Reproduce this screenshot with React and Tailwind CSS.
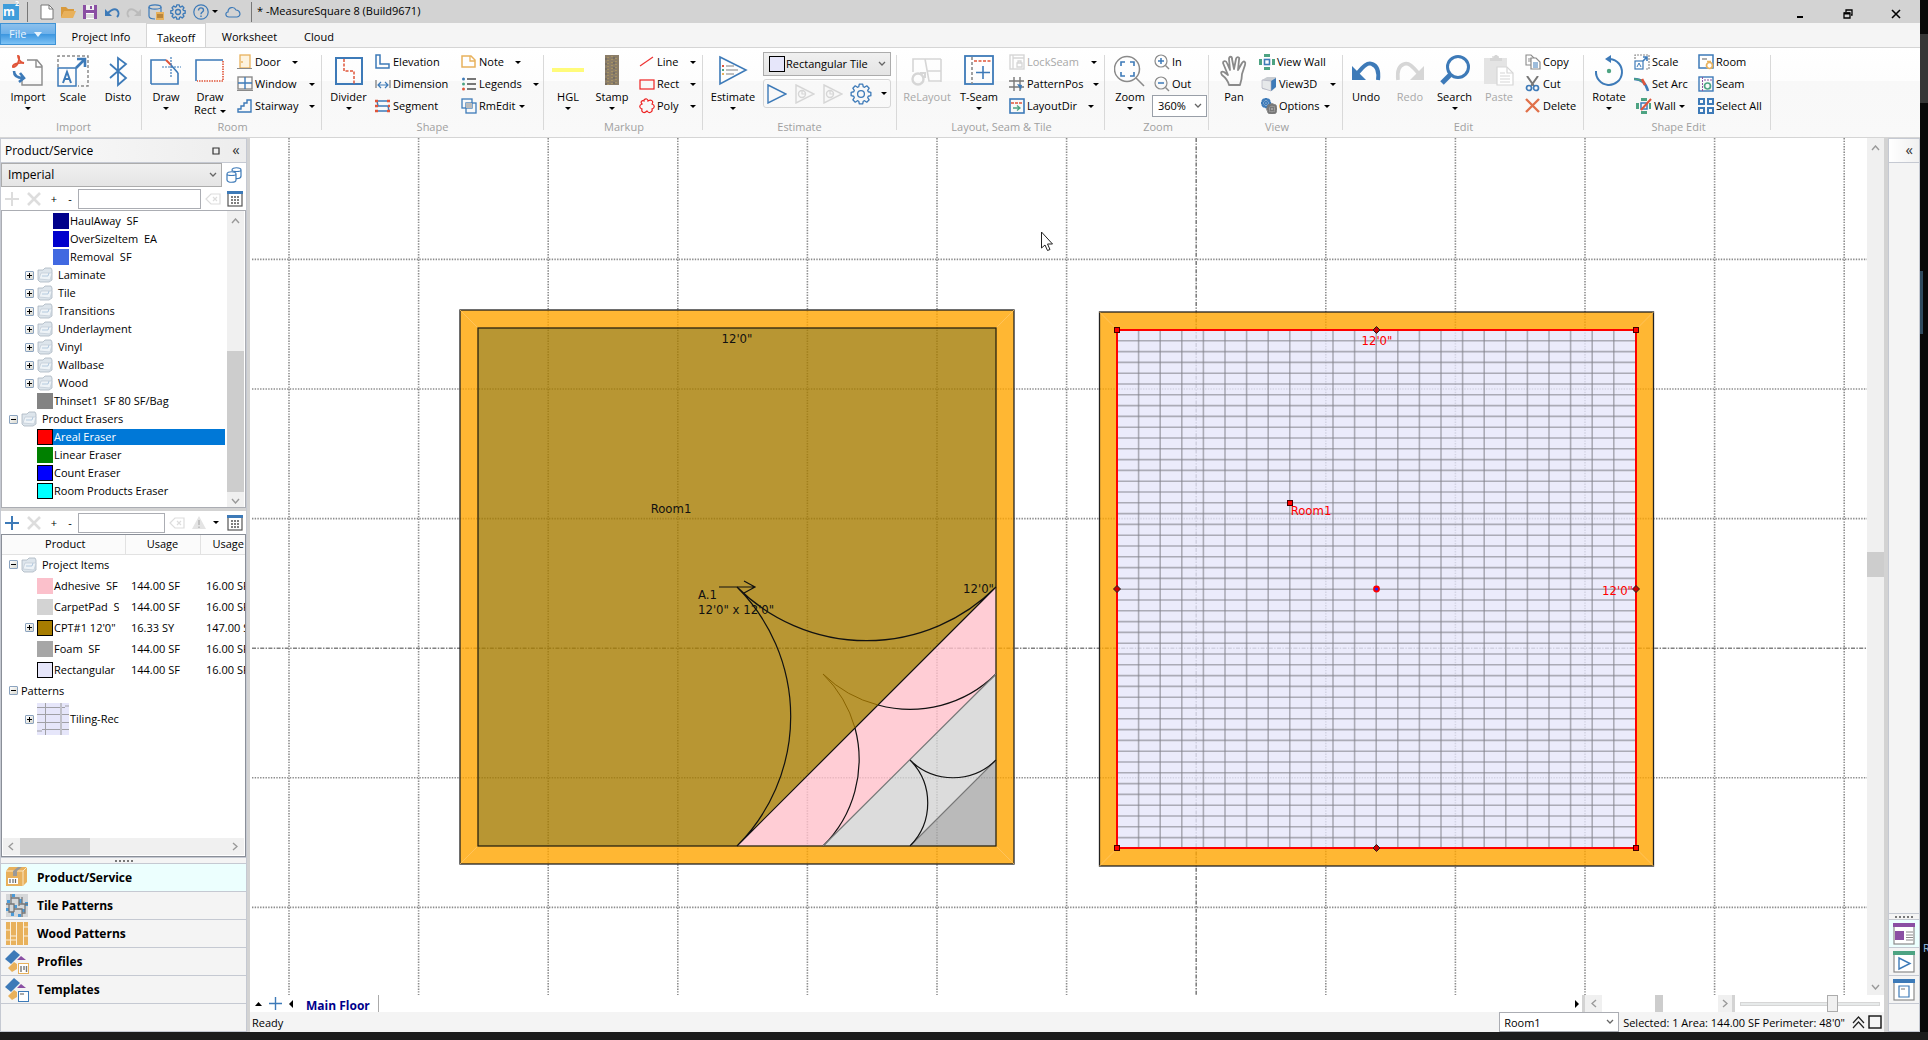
import React from "react";

const B = "#3d7ab8";
const G = "#8a8a8a";
const L = "#d6d6d6";
const R = "#e0553a";
const O = "#e8b15c";
const T = "#4da382";

function Svg({ s = 16, vb, className = "", children }) {
  const box = vb || s;
  return (
    <svg width={s} height={s} viewBox={`0 0 ${box} ${box}`} fill="none" className={`shrink-0 ${className}`} aria-hidden="true">
      {children}
    </svg>
  );
}

const Arrow = ({ className = "" }) => (
  <svg width="6" height="3" viewBox="0 0 6 3" className={`shrink-0 ${className}`} aria-hidden="true">
    <path d="M0 0H6L3 3Z" fill="#000" />
  </svg>
);

const Chevron = ({ className = "" }) => (
  <svg width="8" height="6" viewBox="0 0 8 6" className={`pointer-events-none shrink-0 ${className}`} aria-hidden="true">
    <path d="M1 1L4 4L7 1" fill="none" stroke="#666" strokeWidth="1.3" />
  </svg>
);

function Gear({ cx, cy, r, color, w = 1.5, hole = true }) {
  const pts = [];
  for (let i = 0; i < 8; i++) {
    const a = (i * Math.PI) / 4;
    [[-0.3, 0.76], [-0.17, 1], [0.17, 1], [0.3, 0.76]].forEach(([d, k]) => {
      pts.push(`${(cx + Math.sin(a + d) * r * k).toFixed(2)},${(cy - Math.cos(a + d) * r * k).toFixed(2)}`);
    });
  }
  return (
    <g stroke={color} strokeWidth={w} fill="none" strokeLinejoin="round">
      <polygon points={pts.join(" ")} />
      {hole && <circle cx={cx} cy={cy} r={r * 0.34} />}
    </g>
  );
}

/* ---------- ribbon icons, 32px ---------- */
const big = {
  import: (
    <Svg s={32}>
      <path d="M10 21V30H30V11L25 5H15" stroke={G} strokeWidth="1.4" />
      <path d="M24 5V12H30" stroke={G} strokeWidth="1.4" />
      <path d="M6 1C8 1 7 5 6 8C5 10 3 12 1 12C0 10 5 7 12 8C8 8 6 3 6 1Z" stroke={R} strokeWidth="1.8" />
      <path d="M2 16C2 21 6 23 11 23M8 18L12 23L7 27" stroke={B} strokeWidth="2.6" />
    </Svg>
  ),
  scale: (
    <Svg s={32}>
      <path d="M1 12V1H31V31H21" stroke={G} strokeWidth="1.5" strokeDasharray="3 2" />
      <rect x="1" y="13" width="18" height="18" stroke={B} strokeWidth="1.5" />
      <path d="M6 28L10 17L14 28M7 24H13" stroke={B} strokeWidth="2" />
      <path d="M19 13L27 5M20 4H28V12" stroke={B} strokeWidth="2.6" />
    </Svg>
  ),
  disto: (
    <Svg s={32}>
      <path d="M8 9L24 23L16 30V3L24 9L8 23" stroke={B} strokeWidth="1.8" />
    </Svg>
  ),
  draw: (
    <Svg s={32}>
      <path d="M1 29V5H16M28 18V29H1" stroke={B} strokeWidth="1.6" />
      <path d="M16 5L21 10" stroke={R} strokeWidth="2" />
      <path d="M21 10L28 18" stroke={B} strokeWidth="1.6" />
      <path d="M21 2V22M12 12H31" stroke={B} strokeWidth="1.2" strokeDasharray="2 1" />
    </Svg>
  ),
  drawRect: (
    <Svg s={32}>
      <path d="M2 26V5H29" stroke={B} strokeWidth="1.6" />
      <path d="M29 6V26H3" stroke={R} strokeWidth="1.6" strokeDasharray="1.5 1" />
    </Svg>
  ),
  divider: (
    <Svg s={32}>
      <rect x="3" y="3" width="26" height="26" stroke={B} strokeWidth="2" />
      <path d="M11 4V16H21V29" stroke={R} strokeWidth="1.5" strokeDasharray="3 1.5" />
    </Svg>
  ),
  hgl: (
    <Svg s={32}>
      <path d="M0 15H32" stroke="#fffb7a" strokeWidth="4" />
    </Svg>
  ),
  stamp: (
    <Svg s={32}>
      <rect x="9" y="0" width="14" height="30" fill="#8b7d68" />
      <path d="M12 2V30M16 1V29M20 3V30" stroke="#c2a860" strokeWidth="1" strokeDasharray="1 2" />
      <path d="M10 3V30M18 2V30" stroke="#6d675f" strokeWidth="1.4" strokeDasharray="2 3" />
    </Svg>
  ),
  estimate: (
    <Svg s={32}>
      <path d="M3 2L29 15L3 29Z" stroke={B} strokeWidth="1.6" />
      <path d="M9 11H17M9 15H21M9 19H17" stroke="#aaa" strokeWidth="1.5" />
      <path d="M5 11H7" stroke={R} strokeWidth="2" />
      <path d="M5 15H7" stroke={T} strokeWidth="2" />
      <path d="M5 19H7" stroke={O} strokeWidth="2" />
    </Svg>
  ),
  relayout: (
    <Svg s={32}>
      <path d="M2 17V4H30M14 4L18 26H30M16 16H30M30 4V27" stroke={L} strokeWidth="1.6" />
      <circle cx="7" cy="24" r="5.5" stroke={L} strokeWidth="2.4" />
      <path d="M9 18L14 18V23" stroke={L} strokeWidth="2" />
    </Svg>
  ),
  tseam: (
    <Svg s={32}>
      <rect x="2" y="1" width="28" height="28" stroke={B} strokeWidth="1.8" />
      <path d="M9 2V29" stroke={G} strokeWidth="1.6" strokeDasharray="3 2" />
      <path d="M11 6H29" stroke={R} strokeWidth="1.6" strokeDasharray="3 1.5" />
      <path d="M20 11V24M13 17.5H27" stroke={B} strokeWidth="1.6" />
    </Svg>
  ),
  zoom: (
    <Svg s={32}>
      <circle cx="13" cy="14" r="12.5" stroke={G} strokeWidth="1.5" />
      <path d="M22 23L30 31" stroke={G} strokeWidth="1.6" />
      <path d="M7 11V7H11M16 7H20V11M20 17V21H16M11 21H7V17" stroke={B} strokeWidth="1.6" />
    </Svg>
  ),
  pan: (
    <Svg s={32}>
      <path
        d="M11 30C10 26 8 23 4 20C2 17 4 16 6 17L10 20L5 8C5 6 8 5 9 8L12 15L11 4C11 1 14 1 14 4L16 14L18 4C19 1 22 2 21 5L20 15L24 8C26 5 28 7 27 10L24 19C24 24 23 27 22 30Z"
        stroke={G}
        strokeWidth="1.8"
        strokeLinejoin="round"
      />
    </Svg>
  ),
  undo: (
    <Svg s={32}>
      <path d="M6 20C13 12 17 7 22 9C28 11 29 17 28 25" stroke={B} strokeWidth="4" />
      <path d="M2 11V25H16Z" fill={B} />
    </Svg>
  ),
  redo: (
    <Svg s={32}>
      <path d="M26 20C19 12 15 7 10 9C4 11 3 17 4 25" stroke={L} strokeWidth="3.6" />
      <path d="M30 11V25H16Z" fill={L} />
    </Svg>
  ),
  search: (
    <Svg s={32}>
      <circle cx="19" cy="12" r="10.5" stroke={B} strokeWidth="3" />
      <path d="M11 20L3 28" stroke={B} strokeWidth="5" />
    </Svg>
  ),
  paste: (
    <Svg s={32}>
      <path d="M1 3H9V1H16V3H24V12H14V29H1Z" fill="#e4e4e4" />
      <path d="M7 6V3H10L12 0H14L16 3H19V6Z" fill={L} />
      <path d="M14 12H24L30 18V30H14Z" fill="#fff" stroke={L} strokeWidth="1.2" />
      <path d="M24 12V18H30M17 18H22M17 21H27M17 24H27M17 27H27" stroke={L} strokeWidth="1.2" />
    </Svg>
  ),
  rotate: (
    <Svg s={32}>
      <path d="M3 16A13 13 0 1 0 17 4" stroke={B} strokeWidth="2" />
      <path d="M18 0V8L12 4Z" fill={B} />
      <circle cx="16" cy="16" r="2.2" fill={T} />
    </Svg>
  ),
};

/* ---------- ribbon icons, 16px ---------- */
const sm = {
  door: (
    <Svg>
      <rect x="3" y="1" width="10" height="13" fill="#fdf3df" stroke={O} strokeWidth="1.3" />
      <path d="M0 14.5H15" stroke={G} />
      <circle cx="5" cy="8" r="0.9" fill={O} />
    </Svg>
  ),
  window: (
    <Svg>
      <rect x="1" y="1" width="14" height="12" stroke={G} strokeWidth="1.4" />
      <path d="M8 1V13M1 7H15" stroke={B} strokeWidth="1.4" />
      <path d="M0 14.5H16" stroke={G} />
    </Svg>
  ),
  stair: (
    <Svg>
      <path d="M1 14H14V2H10V5H7V8H4V11H1Z" stroke={B} strokeWidth="1.4" />
    </Svg>
  ),
  elevation: (
    <Svg>
      <path d="M1 1H5V10H14V14H1Z" stroke={B} strokeWidth="1.5" />
    </Svg>
  ),
  dimension: (
    <Svg>
      <path d="M1 4V12M15 4V12" stroke={G} strokeWidth="1.4" />
      <path d="M3 9H13M6 6L3 9L6 12M10 6L13 9L10 12" stroke={B} strokeWidth="1.2" />
    </Svg>
  ),
  segment: (
    <Svg>
      <path d="M1 3H15M1 13H15M2 3L3 8M13 8L14 13M2 8H14" stroke={B} strokeWidth="1.4" />
      <path d="M0 3H3M12 3H15M0 8H3M13 8H15M0 13H3M12 13H15" stroke={R} strokeWidth="2.4" />
    </Svg>
  ),
  note: (
    <Svg>
      <path d="M1 2H10L14 6V13H1Z" stroke={O} strokeWidth="1.5" />
      <path d="M9 2V7H14" stroke={O} strokeWidth="1.3" />
    </Svg>
  ),
  legends: (
    <Svg>
      <path d="M6 3H15M6 8H15M6 13H15" stroke="#777" strokeWidth="1.8" />
      <circle cx="2.5" cy="3" r="1.5" fill={B} />
      <circle cx="2.5" cy="8" r="1.5" fill={T} />
      <circle cx="2.5" cy="13" r="1.5" fill={R} />
    </Svg>
  ),
  rmedit: (
    <Svg>
      <rect x="1" y="1" width="10" height="9" stroke={B} strokeWidth="1.3" />
      <rect x="5" y="5" width="10" height="10" stroke={B} strokeWidth="1.3" />
      <rect x="5" y="5" width="6" height="5" fill="#bbb" />
    </Svg>
  ),
  line: (
    <Svg>
      <path d="M1 12L14 3" stroke="#e33" strokeWidth="1.2" />
    </Svg>
  ),
  rect: (
    <Svg>
      <rect x="1" y="4" width="14" height="9" stroke="#e22" strokeWidth="1.2" />
    </Svg>
  ),
  poly: (
    <Svg>
      <path d="M5 2C7 0 9 1 9 3C12 1 15 3 13 6C16 7 16 10 13 11C14 14 10 16 8 13C5 16 2 14 3 11C0 10 0 7 3 6C1 4 3 2 5 3Z" stroke="#e22" strokeWidth="1.2" />
    </Svg>
  ),
  lockseam: (
    <Svg>
      <rect x="1" y="1" width="14" height="14" stroke={L} strokeWidth="1.4" />
      <path d="M4 1V15M4 4H15M8 9H13V13H8ZM9 9V7H12V9" stroke={L} strokeWidth="1.3" />
    </Svg>
  ),
  patternpos: (
    <Svg>
      <path d="M5 1V15M11 1V15M0 5H15M0 11H15" stroke="#777" strokeWidth="1.4" />
      <path d="M8 8L13 9L12 14Z" fill={B} />
    </Svg>
  ),
  layoutdir: (
    <Svg>
      <rect x="1" y="1" width="14" height="14" stroke={B} strokeWidth="1.6" />
      <path d="M2 5H14" stroke={R} strokeWidth="1.4" strokeDasharray="3 1" />
      <path d="M4 10H11M8 7.5L11 10L8 12.5" stroke={T} strokeWidth="1.3" />
    </Svg>
  ),
  zin: (
    <Svg>
      <circle cx="7" cy="7" r="6" stroke={G} strokeWidth="1.2" />
      <path d="M11.5 11.5L15 15" stroke={G} strokeWidth="1.4" />
      <path d="M7 4V10M4 7H10" stroke={B} strokeWidth="1.5" />
    </Svg>
  ),
  zout: (
    <Svg>
      <circle cx="7" cy="7" r="6" stroke={G} strokeWidth="1.2" />
      <path d="M11.5 11.5L15 15" stroke={G} strokeWidth="1.4" />
      <path d="M4 7H10" stroke={B} strokeWidth="1.5" />
    </Svg>
  ),
  viewwall: (
    <Svg>
      <path d="M5 0H11V3H5ZM5 13H11V16H5ZM0 5H3V11H0ZM13 5H16V11H13Z" fill={T} />
      <rect x="5.5" y="5.5" width="5" height="5" stroke={B} strokeWidth="1.6" />
    </Svg>
  ),
  view3d: (
    <Svg>
      <path d="M1 4L6 1H15V11L11 15L1 13Z" fill="#c9cdd2" />
      <path d="M10 5L15 2V11L10 15Z" fill={B} />
      <path d="M1 4L10 5V15L1 12Z" fill="#e6e8ea" stroke="#aab" strokeWidth="0.6" />
    </Svg>
  ),
  options: (
    <Svg>
      <Gear cx={5} cy={5} r={4.3} color={B} w={1.8} />
      <Gear cx={11} cy={11} r={4.8} color="#777" w={2} />
    </Svg>
  ),
  copy: (
    <Svg>
      <path d="M1 1H6L9 4V11H1ZM3 5H6M3 7H6" stroke={G} strokeWidth="1.1" />
      <path d="M6 4H11L15 8V15H6Z" fill="#fff" stroke={G} strokeWidth="1.2" />
      <path d="M8 9H13M8 11H13M8 13H13" stroke={B} />
    </Svg>
  ),
  cut: (
    <Svg>
      <path d="M2 0L9 10M13 0L6 10" stroke="#777" strokeWidth="2" />
      <circle cx="4" cy="12" r="2.5" stroke={B} strokeWidth="1.7" />
      <circle cx="11" cy="12" r="2.5" stroke={B} strokeWidth="1.7" />
    </Svg>
  ),
  del: (
    <Svg>
      <path d="M1 1L14 14M14 1L1 14" stroke="#e0714a" strokeWidth="2.4" />
    </Svg>
  ),
  scale: (
    <Svg>
      <path d="M1 5V1H15V15H11" stroke={G} strokeWidth="1.2" strokeDasharray="2 1" />
      <rect x="1" y="7" width="8" height="8" stroke={B} strokeWidth="1.2" />
      <path d="M3 13L5 9L7 13" stroke={B} />
      <path d="M9 7L13 3M9 3H13V7" stroke={B} strokeWidth="1.6" />
    </Svg>
  ),
  setarc: (
    <Svg>
      <path d="M0 3C8 3 12 7 14 15" stroke={B} strokeWidth="2.4" />
      <path d="M0 3C5 3 8 5 10 7" stroke={T} strokeWidth="1.6" />
      <path d="M8 3L11 9" stroke={R} strokeWidth="2.6" />
    </Svg>
  ),
  wall: (
    <Svg>
      <path d="M5 0H11V3H5ZM5 13H11V16H5ZM0 5H3V11H0ZM13 5H15V11H13Z" fill={T} />
      <rect x="5" y="5" width="6" height="6" stroke={B} strokeWidth="1.5" />
      <path d="M5 12L15 1" stroke={R} strokeWidth="2" />
    </Svg>
  ),
  room: (
    <Svg>
      <rect x="1" y="1" width="14" height="13" stroke={B} strokeWidth="1.5" />
      <path d="M4 5H9" stroke="#999" strokeWidth="1.6" />
      <circle cx="11.5" cy="11.5" r="3" fill="#fff" stroke={O} strokeWidth="1.7" />
      <path d="M9 7.5H13" stroke={O} strokeWidth="1.5" />
    </Svg>
  ),
  seam: (
    <Svg>
      <rect x="1" y="1" width="14" height="14" stroke={B} strokeWidth="1.4" />
      <path d="M4.5 1V15M6 4H14" stroke="#8c50a0" strokeDasharray="2 1" />
      <circle cx="9.5" cy="10" r="3" stroke={T} strokeWidth="1.7" />
    </Svg>
  ),
  selectall: (
    <Svg>
      <path d="M1 1H6V6H1ZM10 1H15V6H10ZM1 10H6V15H1ZM10 10H15V15H10Z" stroke={B} strokeWidth="2" />
    </Svg>
  ),
};

function Big({ icon, label, w = "w-11", arrow, off, inlineArrow }) {
  return (
    <button className={`flex shrink-0 flex-col items-center pt-[7px] ${w} ${off ? "text-[#a8a8a8]" : "text-black"}`}>
      {big[icon]}
      <span className="mt-[3px] text-center leading-[13px] whitespace-pre">
        {label}
        {inlineArrow && <Arrow className="ml-1 inline-block align-middle" />}
      </span>
      {arrow && <Arrow className="mt-1" />}
    </button>
  );
}

function Small({ icon, label, w = "", arrow, off }) {
  return (
    <button className={`flex h-[22px] items-center gap-[2px] whitespace-nowrap ${w} ${off ? "text-[#a8a8a8]" : "text-black"}`}>
      {sm[icon]}
      <span>{label}</span>
      {arrow && <Arrow className="ml-auto" />}
    </button>
  );
}

function Group({ label, w, children }) {
  return (
    <section aria-label={label} className={`flex shrink-0 ${w}`}>
      <div className="flex min-w-0 grow flex-col">
        <div className="flex h-[71px]">{children}</div>
        <div className="text-center leading-4 text-[#a0a0a0]">{label}</div>
      </div>
      <div className="mt-[7px] h-[75px] w-px bg-[#d9d9d9]" />
    </section>
  );
}

const Stack = ({ className = "", children }) => <div className={`flex shrink-0 flex-col items-start pt-[3px] ${className}`}>{children}</div>;

function TitleBar() {
  const btn = "flex h-5 w-5 shrink-0 items-center justify-center";
  return (
    <header className="flex h-[23px] items-center bg-[#d3d3d3] pl-[3px]">
      <div className="flex h-4 w-4 items-start justify-center bg-[#3f9ddb] text-[12px] leading-4 font-bold text-white">
        m<sup className="text-[7px] leading-[8px]">2</sup>
      </div>
      <div className="ml-2 h-5 w-px bg-[#777]" />
      <div className="ml-[9px] flex">
        <button aria-label="New" className={btn}><Svg><path d="M2 1H10L14 5V15H2Z" fill="#fff" stroke="#777" /><path d="M10 1V5H14" stroke="#777" /></Svg></button>
        <button aria-label="Open" className={`${btn} ml-[1px]`}><Svg><path d="M1 14V3H6L8 5H14V8H4Z" fill="#d99a3c" /><path d="M4 7H16L13 14H1Z" fill={O} /></Svg></button>
        <button aria-label="Save" className={`${btn} ml-[2px]`}><Svg><path d="M1 1H15V15H1Z" fill="#8a4fa3" /><path d="M4 1H12V6H4Z" fill="#eee" /><path d="M4 9H12V15H4Z" fill="#fff" /><path d="M9 2V5" stroke="#8a4fa3" strokeWidth="2" /><path d="M4 11H12M4 13H12" stroke="#bbb" /></Svg></button>
        <button aria-label="Undo" className={`${btn} ml-[2px]`}><Svg><path d="M3 10C7 6 10 4 13 6C15 8 15 11 13 13" stroke={B} strokeWidth="2" /><path d="M1 5V12H8Z" fill={B} /></Svg></button>
        <button aria-label="Redo" className={`${btn} ml-[2px]`}><Svg><path d="M13 10C9 6 6 4 3 6C1 8 1 11 3 13" stroke="#bbb" strokeWidth="2" /><path d="M15 5V12H8Z" fill="#bbb" /></Svg></button>
        <button aria-label="Database" className={`${btn} ml-[2px]`}><Svg><ellipse cx="7" cy="3" rx="6" ry="2.2" stroke={B} strokeWidth="1.2" /><path d="M1 3V12C1 14 4 15 7 15M13 3V8" stroke={B} strokeWidth="1.2" /><rect x="8" y="8" width="8" height="8" fill={O} /><path d="M10 10V14M12 10V14M14 10V14" stroke="#8a5a1c" /></Svg></button>
        <button aria-label="Settings" className={`${btn} ml-[2px]`}><Svg><Gear cx={8} cy={8} r={7.3} color={B} w={1.3} /></Svg></button>
        <button aria-label="Help" className={`${btn} ml-[3px]`}><Svg><circle cx="8" cy="8" r="7.2" stroke={B} strokeWidth="1.2" /><path d="M5.5 6.5C5.5 3 10.5 3 10.5 6.2C10.5 8 8 8 8 10.2M8 11.5V13" stroke={B} strokeWidth="1.4" /></Svg></button>
        <button aria-label="Help menu" className="flex w-2 items-center justify-center"><Arrow /></button>
        <button aria-label="Cloud" className={`${btn} ml-1`}><Svg><path d="M4 13C0 13 0 8 3 8C3 3 9 2 11 6C15 6 17 12 12 13Z" stroke={B} strokeWidth="1.2" /></Svg></button>
      </div>
      <div className="ml-2 h-5 w-px bg-[#777]" />
      <h1 className="ml-[5px] text-[11px] whitespace-nowrap text-black">* -MeasureSquare 8 (Build9671)</h1>
      <div className="ml-auto flex items-center pt-1">
        <button aria-label="Minimize" className="flex h-4 w-12 items-center justify-center"><Svg s={10}><path d="M2 8H8" stroke="#000" strokeWidth="2" /></Svg></button>
        <button aria-label="Restore" className="flex h-4 w-12 items-center justify-center"><Svg s={10}><path d="M1 4H7V9H1ZM3 3V1H9V6H8" stroke="#000" strokeWidth="1.3" /><path d="M1 4.5H7" stroke="#000" strokeWidth="2" /></Svg></button>
        <button aria-label="Close" className="flex h-4 w-12 items-center justify-center"><Svg s={10}><path d="M1 1L9 9M9 1L1 9" stroke="#000" strokeWidth="1.6" /></Svg></button>
      </div>
    </header>
  );
}

function Tabs() {
  return (
    <nav className="flex h-6 items-start bg-[#f5f5f5] text-[11px] leading-5">
      <button className="flex h-[22px] w-14 items-center gap-2 border border-[#3f93d6] bg-[linear-gradient(#8cc0ec_0,#6cb0ea_50%,#3b95df_50%,#7fc3f5_100%)] pl-2 text-[#e8f4fd]">
        File
        <svg width="8" height="5" viewBox="0 0 8 5" aria-hidden="true"><path d="M0 0H8L4 5Z" fill="#e8f4fd" /></svg>
      </button>
      <button className="ml-[6px] h-6 w-[78px] pt-1">Project Info</button>
      <button className="ml-[6px] -mb-px h-[25px] w-[60px] border border-b-0 border-[#d5d5d5] bg-white pt-[3px]">Takeoff</button>
      <button className="ml-[6px] h-6 w-[75px] pt-1">Worksheet</button>
      <button className="ml-[6px] h-6 w-[52px] pt-1">Cloud</button>
    </nav>
  );
}

const PlayMini = ({ color, inner }) => (
  <Svg s={20}>
    <path d="M1 1L19 10L1 19Z" stroke={color} strokeWidth="1.4" />
    {inner && <><circle cx="7" cy="10" r="3.5" stroke={color} strokeWidth="1.4" /><path d="M7 7V10H10" stroke={color} strokeWidth="1.2" /></>}
  </Svg>
);

function Ribbon() {
  return (
    <div className="flex h-[91px] border-t border-b border-[#d5d5d5] bg-[linear-gradient(#fff_0,#fdfdfd_33px,#f8f8f8_33px,#f9f9f9_100%)] pl-px text-[11px] leading-4">
      <Group label="Import" w="w-[141px] pl-[5px]">
        <Big icon="import" label="Import" arrow />
        <Big icon="scale" label="Scale" w="w-[46px]" />
        <Big icon="disto" label="Disto" />
      </Group>
      <Group label="Room" w="w-[180px] pl-[2px]">
        <Big icon="draw" label="Draw" arrow />
        <Big icon="drawRect" label={"Draw\nRect"} inlineArrow />
        <Stack className="ml-[5px]">
          <Small icon="door" label="Door" w="w-[61px]" arrow />
          <Small icon="window" label="Window" w="w-[78px]" arrow />
          <Small icon="stair" label="Stairway" w="w-[78px]" arrow />
        </Stack>
      </Group>
      <Group label="Shape" w="w-[222px]">
        <Big icon="divider" label="Divider" w="w-[53px]" arrow />
        <Stack>
          <Small icon="elevation" label="Elevation" w="w-[86px]" />
          <Small icon="dimension" label="Dimension" w="w-[86px]" />
          <Small icon="segment" label="Segment" w="w-[86px]" />
        </Stack>
        <Stack>
          <Small icon="note" label="Note" w="w-[60px]" arrow />
          <Small icon="legends" label="Legends" w="w-[78px]" arrow />
          <Small icon="rmedit" label="RmEdit" w="w-16" arrow />
        </Stack>
      </Group>
      <Group label="Markup" w="w-[159px] pl-[2px]">
        <Big icon="hgl" label="HGL" arrow />
        <Big icon="stamp" label="Stamp" arrow />
        <Stack className="ml-[5px]">
          <Small icon="line" label="Line" w="w-[57px]" arrow />
          <Small icon="rect" label="Rect" w="w-[57px]" arrow />
          <Small icon="poly" label="Poly" w="w-[57px]" arrow />
        </Stack>
      </Group>
      <Group label="Estimate" w="w-[194px]">
        <Big icon="estimate" label="Estimate" w="w-[60px]" arrow />
        <div className="flex w-32 flex-col gap-[3px] pt-1">
          <div className="relative h-6">
            <div className="pointer-events-none absolute top-1 left-[6px] h-4 w-4 border border-black bg-[#e6e6fa]" />
            <select aria-label="Product" className="h-6 w-full appearance-none border border-[#acacac] bg-linear-to-b from-[#f0f0f0] to-[#e4e4e4] pl-[22px] text-[11px]">
              <option>Rectangular Tile</option>
            </select>
            <Chevron className="absolute top-[9px] right-[5px]" />
          </div>
          <div className="flex h-[29px] items-center rounded-[3px] border border-[#d5d5d5] px-[3px]">
            <button aria-label="Run"><PlayMini color={B} /></button>
            <button aria-label="Run again" className="ml-2"><PlayMini color={L} inner /></button>
            <button aria-label="Run all" className="ml-2"><PlayMini color={L} inner /></button>
            <button aria-label="Estimate options" className="ml-[7px]"><Svg s={22}><Gear cx={11} cy={11} r={10} color={B} w={1.3} /></Svg></button>
            <button aria-label="More estimate options" className="ml-auto"><Arrow /></button>
          </div>
        </div>
      </Group>
      <Group label="Layout, Seam & Tile" w="w-[208px] pl-[2px]">
        <Big icon="relayout" label="ReLayout" w="w-[56px]" off />
        <Big icon="tseam" label="T-Seam" w="w-12" arrow />
        <Stack className="ml-[6px]">
          <Small icon="lockseam" label="LockSeam" w="w-[88px]" arrow off />
          <Small icon="patternpos" label="PatternPos" w="w-[90px]" arrow />
          <Small icon="layoutdir" label="LayoutDir" w="w-[85px]" arrow />
        </Stack>
      </Group>
      <Group label="Zoom" w="w-[104px] pl-[3px]">
        <Big icon="zoom" label="Zoom" arrow />
        <Stack className="w-[55px]">
          <Small icon="zin" label="In" w="ml-[2px]" />
          <Small icon="zout" label="Out" w="ml-[2px]" />
          <div className="relative w-full">
            <select aria-label="Zoom level" className="h-[22px] w-full appearance-none border border-[#999fa8] bg-white pl-[5px] text-[11px]">
              <option>360%</option>
            </select>
            <Chevron className="absolute top-2 right-[5px]" />
          </div>
        </Stack>
      </Group>
      <Group label="View" w="w-[134px] pl-[3px]">
        <Big icon="pan" label="Pan" />
        <Stack className="ml-[3px]">
          <Small icon="viewwall" label="View Wall" />
          <Small icon="view3d" label="View3D" w="pl-[2px] w-[77px]" arrow />
          <Small icon="options" label="Options" w="pl-[2px] w-[71px]" arrow />
        </Stack>
      </Group>
      <Group label="Edit" w="w-[241px] pl-px">
        <Big icon="undo" label="Undo" />
        <Big icon="redo" label="Redo" off />
        <Big icon="search" label="Search" w="w-[45px]" arrow />
        <Big icon="paste" label="Paste" off />
        <Stack className="ml-1">
          <Small icon="copy" label="Copy" />
          <Small icon="cut" label="Cut" />
          <Small icon="del" label="Delete" />
        </Stack>
      </Group>
      <Group label="Shape Edit" w="w-[187px] pl-[3px]">
        <Big icon="rotate" label="Rotate" arrow />
        <Stack className="ml-[3px]">
          <Small icon="scale" label="Scale" w="w-16" />
          <Small icon="setarc" label="Set Arc" w="w-16" />
          <Small icon="wall" label="Wall" w="pl-[2px] w-[51px]" arrow />
        </Stack>
        <Stack>
          <Small icon="room" label="Room" />
          <Small icon="seam" label="Seam" />
          <Small icon="selectall" label="Select All" />
        </Stack>
      </Group>
    </div>
  );
}

/* ---------- left panel ---------- */
const Expander = ({ open }) => (
  <button aria-label={open ? "Collapse" : "Expand"} className="flex h-[9px] w-[9px] shrink-0 items-center justify-center rounded-[1px] border border-[#8ba3bf] bg-linear-to-br from-white to-[#d8d8d0]">
    <svg width="5" height="5" viewBox="0 0 5 5" aria-hidden="true"><path d={open ? "M0 2.5H5" : "M0 2.5H5M2.5 0V5"} stroke="#000" /></svg>
  </button>
);

const Folder = () => (
  <Svg>
    <path d="M1 13V3H6L8 1H14L15 3V13L12 15H3Z" fill="#dde5ec" stroke="#a9b5c0" strokeWidth="0.8" />
    <path d="M2 12L4 6H15L13 13Z" fill="#eef3f7" stroke="#b9c5d0" strokeWidth="0.6" />
    <path d="M5 9H11L12 6" stroke="#a4bfd8" strokeWidth="0.8" />
  </Svg>
);

const Swatch = ({ color, border }) => <span className={`block h-4 w-4 shrink-0 ${color} ${border ? "border border-black" : ""}`} />;

const PlusMinus = () => (
  <>
    <button className="w-4 text-center leading-4" aria-label="Expand all">+</button>
    <button className="w-4 text-center leading-4" aria-label="Collapse all">-</button>
  </>
);

const GridIcon = () => (
  <Svg s={16}>
    <rect x="1" y="1" width="14" height="14" fill="#fff" stroke="#555" strokeWidth="1.2" />
    <path d="M0 1.5H16" stroke={B} strokeWidth="3" />
    <path d="M4 6H6M7 6H9M10 6H12M4 9H6M7 9H9M10 9H12M4 12H6M7 12H9M10 12H12" stroke="#555" strokeWidth="1.5" />
  </Svg>
);

const Backspace = () => (
  <Svg>
    <path d="M1 8L6 3H15V13H6Z" stroke="#ddd" strokeWidth="1.2" />
    <path d="M8 6L12 10M12 6L8 10" stroke="#ddd" strokeWidth="1.2" />
  </Svg>
);

const XIcon = () => <Svg><path d="M2 2L14 14M14 2L2 14" stroke="#ddd" strokeWidth="2.6" /></Svg>;
const PlusIcon = ({ color }) => <Svg><path d="M8 1V15M1 8H15" stroke={color} strokeWidth="2" /></Svg>;

const items = [
  ["HaulAway  SF", "bg-[#00008b]"],
  ["OverSizeItem  EA", "bg-[#0000cd]"],
  ["Removal  SF", "bg-[#4169e1]"],
];
const folders = ["Laminate", "Tile", "Transitions", "Underlayment", "Vinyl", "Wallbase", "Wood"];
const erasers = [
  ["Areal Eraser", "bg-[#ff0000]", true, true],
  ["Linear Eraser", "bg-[#008000]", false],
  ["Count Eraser", "bg-[#0000ff]", true],
  ["Room Products Eraser", "bg-[#00ffff]", true],
];

const VArrow = ({ up }) => (
  <svg width="9" height="6" viewBox="0 0 9 6" aria-hidden="true"><path d={up ? "M1 5L4.5 1L8 5" : "M1 1L4.5 5L8 1"} fill="none" stroke="#999" strokeWidth="1.4" /></svg>
);
const HArrow = ({ left }) => (
  <svg width="6" height="9" viewBox="0 0 6 9" aria-hidden="true"><path d={left ? "M5 1L1 4.5L5 8" : "M1 1L5 4.5L1 8"} fill="none" stroke="#999" strokeWidth="1.4" /></svg>
);

function ProductTree() {
  const row = "flex h-[18px] items-center whitespace-pre";
  return (
    <div className="flex h-[298px] shrink-0 border border-[#abadb3] bg-white">
      <ul className="min-w-0 grow overflow-hidden pt-px pr-[2px]">
        {items.map(([t, c]) => (
          <li key={t} className={`${row} pl-[51px]`}><Swatch color={c} /><span className="pl-px">{t}</span></li>
        ))}
        {folders.map((t) => (
          <li key={t} className={`${row} gap-[3px] pl-[23px]`}><Expander /><Folder /><span className="pl-[2px]">{t}</span></li>
        ))}
        <li className={`${row} pl-[35px]`}><Swatch color="bg-[#838383]" /><span className="pl-px">Thinset1  SF 80 SF/Bag</span></li>
        <li className={`${row} gap-[3px] pl-[7px]`}><Expander open /><Folder /><span className="pl-[2px]">Product Erasers</span></li>
        {erasers.map(([t, c, b, sel]) => (
          <li key={t} className={`${row} pl-[35px]`}>
            <Swatch color={c} border={b} />
            <span className={`h-4 grow pl-px leading-4 ${sel ? "bg-[#0078d7] text-white" : ""}`}>{t}</span>
          </li>
        ))}
      </ul>
      <div className="mr-px flex w-[17px] shrink-0 flex-col items-center bg-[#f0f0f0] pt-[7px]">
        <VArrow up />
        <div className="mt-[127px] h-[141px] w-full bg-[#cdcdcd]" />
        <div className="mt-[6px]"><VArrow /></div>
      </div>
    </div>
  );
}

const usage = [
  ["Adhesive  SF", "bg-[#fbc0cb]", false, "144.00 SF", "16.00 SF"],
  ["CarpetPad  SF", "bg-[#d3d3d3]", false, "144.00 SF", "16.00 SF"],
  ["CPT#1 12'0\"", "bg-[#a67c00]", true, "16.33 SY", "147.00 SF"],
  ["Foam  SF", "bg-[#a6a6a6]", false, "144.00 SF", "16.00 SF"],
  ["Rectangular", "bg-[#e6e6fa]", true, "144.00 SF", "16.00 SF"],
];

function UsageTable() {
  return (
    <div className="flex min-h-0 grow flex-col border border-[#8a8f98] bg-white">
      <div className="min-h-0 grow overflow-hidden">
        <table className="w-[254px] table-fixed border-collapse whitespace-pre">
          <thead>
            <tr className="h-[19px] bg-[#fbfbfb] text-center">
              <th className="w-[123px] border-r border-b border-[#e2e2e2] p-0 pl-1 font-normal">Product</th>
              <th className="w-[75px] border-r border-b border-[#e2e2e2] p-0 font-normal">Usage</th>
              <th className="border-b border-[#e2e2e2] p-0 font-normal">Usage</th>
            </tr>
          </thead>
          <tbody>
            <tr className="h-[21px]">
              <td colSpan={3} className="p-0">
                <div className="flex items-center gap-[3px] pl-[7px]"><Expander open /><Folder /><span className="pl-[2px]">Project Items</span></div>
              </td>
            </tr>
            {usage.map(([n, c, b, u1, u2]) => (
              <tr key={n} className="h-[21px]">
                <td className="p-0">
                  <div className="flex w-[117px] items-center overflow-hidden pl-[23px]">
                    {n.startsWith("CPT") ? <Expander /> : <span className="w-[9px] shrink-0" />}
                    <span className="w-[3px] shrink-0" />
                    <Swatch color={c} border={b} />
                    <span className="pl-px">{n}</span>
                  </div>
                </td>
                <td className="p-0 pl-[6px]">{u1}</td>
                <td className="p-0 pl-[6px]"><div className="overflow-hidden">{u2}</div></td>
              </tr>
            ))}
            <tr className="h-[21px]">
              <td colSpan={3} className="p-0">
                <div className="flex items-center gap-[3px] pl-[7px]"><Expander open /><span>Patterns</span></div>
              </td>
            </tr>
            <tr className="h-9">
              <td className="p-0">
                <div className="flex w-[117px] items-center overflow-hidden pl-[23px]">
                  <Expander />
                  <Svg s={32} className="ml-[3px]">
                    <rect width="32" height="32" fill="#e6e6fa" />
                    <path d="M8.5 0V32M0 4.5H28M0 11.5H32M0 19.5H32M5 26.5H32M0 28H5M28 3H32" stroke="#a0a0a6" />
                    <path d="M24 0V32" stroke="#c0c0c8" strokeWidth="2" />
                  </Svg>
                  <span className="pl-px">Tiling-Rectangular</span>
                </div>
              </td>
              <td /><td />
            </tr>
          </tbody>
        </table>
      </div>
      <div className="mx-px mb-px flex h-[17px] shrink-0 items-center bg-[#f0f0f0] pl-[5px]">
        <HArrow left />
        <div className="ml-[6px] h-[17px] w-[70px] bg-[#cdcdcd]" />
        <div className="mr-[6px] ml-auto"><HArrow /></div>
      </div>
    </div>
  );
}

const TagIcon = ({ kind }) => (
  <Svg s={24}>
    <path d="M0 9L9 0L15 5L6 14Z" fill={B} />
    <path d="M12 10L16 6L21 10Z" fill="#8a4fa3" />
    <path d="M3 18L9 12L12 14V19L7 22Z" fill={O} />
    <rect x="13.5" y="13.5" width="10" height="10" fill="#fff" stroke={kind === "p" ? O : B} />
    {kind === "p" ? <path d="M16 16V22M19 16V20M21.5 16V22" stroke="#777" strokeWidth="1.4" /> : <path d="M15 16H19" stroke="#aaa" strokeWidth="2" />}
  </Svg>
);

const nav = [
  ["Product/Service", (
    <Svg s={24}>
      <path d="M1 5L4 1H22V16L18 20H1Z" fill={O} />
      <path d="M1 5H18L22 1M18 5V20" stroke="#fbe6c0" />
      <path d="M8 5L13 1H17L12 5V10H8Z" fill="#999" />
      <rect x="3" y="12" width="10" height="6" fill="#fff" />
      <path d="M5 13V17M8 13V17M10.5 13V17" stroke="#666" strokeWidth="1.2" />
    </Svg>
  )],
  ["Tile Patterns", (
    <Svg s={24}>
      <rect x="1" y="0" width="22" height="23" fill="#d5d7d9" />
      <path d="M7 0H10V3H7ZM14 5H17V9H14ZM2 6H5V9H2ZM20 8H23V12H20ZM9 11H12V14H9ZM17 15H20V18H17ZM1 14H4V17H1ZM6 18H9V22H6ZM13 20H16V23H13Z" fill="#4a9ad8" />
      <path d="M6 0V10M6 4H14V12M14 10H23M1 10H9V18M9 15H17V23M17 3V10M20 10V19H17M4 10V18H9" stroke="#777" strokeWidth="1.3" />
    </Svg>
  )],
  ["Wood Patterns", (
    <Svg s={24}>
      <rect x="1" y="0" width="22" height="23" fill={O} />
      <path d="M5.5 0V23M11.5 0V23M18.5 0V23M1 8H5M6 14H11M12 18H0M19 14H23M19 5H23" stroke="#fbf0dc" />
    </Svg>
  )],
  ["Profiles", <TagIcon kind="p" />],
  ["Templates", <TagIcon kind="t" />],
];

const Dots = () => (
  <div className="flex h-[6px] shrink-0 items-center justify-center gap-[2px] border-t border-[#c5c9d2] bg-[#f4f4f4]">
    {[0, 1, 2, 3, 4].map((i) => <span key={i} className="h-[2px] w-[2px] bg-[#777]" />)}
  </div>
);

function LeftPanel() {
  return (
    <aside className="flex w-[247px] shrink-0 flex-col border-r border-l border-[#c5c9d2] bg-white text-[11px] leading-4">
      <div className="flex h-[25px] shrink-0 items-center border-t border-b border-[#c5c9d2] bg-linear-to-r from-[#fafafa] to-[#ededed] pl-1">
        <h2 className="text-[12px]">Product/Service</h2>
        <button aria-label="Float" className="ml-auto flex w-5 justify-center"><Svg s={8}><path d="M1 1H7V7H1Z" stroke="#333" strokeWidth="1.2" /></Svg></button>
        <button aria-label="Hide panel" className="mb-1 w-5 text-center text-[15px] text-[#333]">«</button>
      </div>
      <div className="flex h-6 shrink-0 items-center">
        <div className="relative h-6 w-[221px]">
          <select aria-label="Units" className="h-6 w-full appearance-none border border-[#acacac] bg-linear-to-b from-[#f0f0f0] to-[#e5e5e5] pl-[6px] text-[12px]">
            <option>Imperial</option>
          </select>
          <Chevron className="absolute top-[9px] right-[5px]" />
        </div>
        <button aria-label="Database" className="ml-1"><Svg>
          <path d="M6 3C6 0 15 0 15 3V9C15 12 10 12 8 11M6 3C6 5 15 5 15 3" stroke={B} strokeWidth="1.2" />
          <path d="M1 7C1 4 10 4 10 7V13C10 16 1 16 1 13ZM1 7C1 9 10 9 10 7" fill="#fff" stroke={B} strokeWidth="1.2" />
        </Svg></button>
      </div>
      <div className="flex h-[23px] shrink-0 items-center pl-[3px]">
        <button aria-label="Add product"><PlusIcon color="#ddd" /></button>
        <button aria-label="Delete product" className="mr-1 ml-[6px]"><XIcon /></button>
        <PlusMinus />
        <input aria-label="Search products" className="h-5 w-[123px] border border-[#abadb3] bg-white px-1" />
        <button aria-label="Clear search" className="ml-1"><Backspace /></button>
        <button aria-label="Columns" className="ml-[6px]"><GridIcon /></button>
      </div>
      <ProductTree />
      <div className="h-[3px] shrink-0 bg-[#d3d3d3]" />
      <div className="flex h-[23px] shrink-0 items-center pl-[3px]">
        <button aria-label="Add item"><PlusIcon color={B} /></button>
        <button aria-label="Delete item" className="mr-1 ml-[6px]"><XIcon /></button>
        <PlusMinus />
        <input aria-label="Search items" className="h-5 w-[87px] border border-[#abadb3] bg-white px-1" />
        <button aria-label="Clear item search" className="ml-1"><Backspace /></button>
        <button aria-label="Warnings" className="ml-[6px]"><Svg><path d="M8 1L15 14H1Z" fill="#e4e4e4" /><path d="M8 5V10M8 11.5V13" stroke="#bbb" strokeWidth="1.6" /></Svg></button>
        <button aria-label="Warning options" className="ml-[6px]"><Arrow /></button>
        <button aria-label="Item columns" className="ml-2"><GridIcon /></button>
      </div>
      <UsageTable />
      <Dots />
      <nav className="shrink-0 bg-[#f4f4f4] text-[12px]">
        {nav.map(([t, icon], i) => (
          <button key={t} className={`flex h-7 w-full items-center gap-2 border-t border-[#c5c9d2] pl-1 font-bold ${i === 0 ? "bg-[#ecfffe]" : ""}`}>
            {icon}
            {t}
          </button>
        ))}
        <div className="h-[29px] border-t border-b border-[#c5c9d2]" />
      </nav>
    </aside>
  );
}

/* ---------- floor plan ---------- */
const PITCH = 129.6;
const range = (n) => Array.from({ length: n }, (_, i) => i);

const Handle = ({ x, y }) => <rect x={x - 2.5} y={y - 2.5} width="5" height="5" fill="#f00" stroke="#400" strokeWidth="1" />;
const Diamond = ({ x, y }) => <path d={`M${x} ${y - 3.5}l3.5 3.5l-3.5 3.5l-3.5 -3.5Z`} fill="#c00" stroke="#222" strokeWidth="1" />;

function Wall({ x, y }) {
  return (
    <g>
      <path d={`M${x} ${y}h554v554h-554ZM${x + 18} ${y + 18}v518h518v-518Z`} fill="#ffa500" fillOpacity="0.8" />
      <rect x={x} y={y} width="554" height="554" stroke="#222" strokeWidth="1.3" fill="none" />
      <path d={`M${x} ${y}l18 18M${x + 554} ${y}l-18 18M${x} ${y + 554}l18 -18M${x + 554} ${y + 554}l-18 -18`} stroke="#ffc766" strokeWidth="0.8" />
    </g>
  );
}

function FloorPlan() {
  return (
    <svg
      className="absolute inset-0 h-full w-full font-['DejaVu_Sans_Condensed','DejaVu_Sans',sans-serif] text-[13px]"
      fill="none"
      role="img"
      aria-label="Main Floor plan"
    >
      <g transform="translate(-250 -138)">
        <g stroke="#8c8c8c" strokeWidth="1.6" strokeDasharray="1.4 1.3">
          {range(20).filter((i) => i !== 7).map((i) => <path key={i} d={`M${289 + i * PITCH} 138V1600`} />)}
          {range(10).filter((i) => i !== 3).map((i) => <path key={i} d={`M252 ${259.4 + i * PITCH}H3000`} />)}
        </g>
        <g stroke="#808080" strokeWidth="1.6" strokeDasharray="4 1.4 1.4 1.4">
          <path d={`M${289 + 7 * PITCH} 138V1600`} />
          <path d={`M252 ${259.4 + 3 * PITCH}H3000`} />
        </g>

        <Wall x={460} y={310} />
        <g fillOpacity="0.8" strokeLinejoin="round">
          <path d="M478 328H996V587L737 846H478Z" fill="#a67c00" />
          <path d="M996 587V674L823 846H737Z" fill="#ffc0cb" />
          <path d="M996 674V760L910 846H823Z" fill="#d3d3d3" />
          <path d="M996 760V846H910Z" fill="#a9a9a9" />
        </g>
        <rect x="478" y="328" width="518" height="518" stroke="#2a2410" strokeWidth="1.3" />
        <path d="M996 587L737 846M737 587A183 183 0 0 0 996 587M737 587A183 183 0 0 1 737 846" stroke="#111" strokeWidth="1.2" />
        <path d="M823 674A122 122 0 0 0 878 705M823 674A122 122 0 0 1 855 728" stroke="#8a6400" />
        <path d="M878 705A122 122 0 0 0 996 674M855 728A122 122 0 0 1 823 846" stroke="#111" strokeWidth="1.2" />
        <path d="M996 674L823 846M996 760L910 846" stroke="#777" strokeWidth="1.2" />
        <path d="M910 760A61 61 0 0 0 996 760M910 760A61 61 0 0 1 910 846" stroke="#111" strokeWidth="1.2" />
        <path d="M719 587H755M744 581L755 587L744 593" stroke="#111" strokeWidth="1.2" />
        <g fill="#111">
          <text x="737" y="343" textAnchor="middle">12'0"</text>
          <text x="671" y="513" textAnchor="middle">Room1</text>
          <text x="994" y="593" textAnchor="end">12'0"</text>
          <text x="698" y="599">A.1</text>
          <text x="698" y="614">12'0" x 12'0"</text>
        </g>

        <Wall x={1099.5} y={312} />
        <rect x="1117" y="330" width="519" height="518" fill="#e6e6fa" fillOpacity="0.8" />
        <g stroke="#808088" strokeOpacity="0.6" strokeWidth="1.6">
          {range(23).map((i) => <path key={i} d={`M${1117 + (i + 1) * 21.6} 330V848`} />)}
          {range(47).map((i) => <path key={i} d={`M1117 ${330 + (i + 1) * 10.8}H1636`} />)}
        </g>
        <rect x="1117" y="330" width="519" height="518" stroke="#f00" strokeWidth="2" />
        {[[1117, 330], [1636, 330], [1117, 848], [1636, 848], [1290, 503]].map(([x, y]) => <Handle key={`${x}-${y}`} x={x} y={y} />)}
        {[[1376.5, 330], [1376.5, 848], [1117, 589], [1636, 589]].map(([x, y]) => <Diamond key={`${x}-${y}`} x={x} y={y} />)}
        <circle cx="1376.5" cy="589" r="2.5" fill="#22f" stroke="#f00" strokeWidth="1.8" />
        <g fill="#f00">
          <text x="1377" y="345" textAnchor="middle">12'0"</text>
          <text x="1311" y="515" textAnchor="middle">Room1</text>
          <text x="1633" y="595" textAnchor="end">12'0"</text>
        </g>
        <path d="M1041.5 232V248L1045 245L1047.5 250.5L1050 249.5L1047.5 244H1052.5Z" fill="#fff" stroke="#222" strokeWidth="1" />
      </g>
    </svg>
  );
}

function Center() {
  return (
    <main className="flex min-w-0 grow flex-col bg-white text-[11px] leading-4">
      <div className="flex min-h-0 grow">
        <div className="relative min-w-0 grow overflow-hidden"><FloorPlan /></div>
        <div className="flex w-[17px] shrink-0 flex-col items-center bg-[#f0f0f0] pt-[7px] pb-[5px]">
          <VArrow up />
          <div className="mt-[401px] h-[25px] w-full bg-[#cdcdcd]" />
          <div className="mt-auto"><VArrow /></div>
        </div>
      </div>
      <div className="flex h-[17px] shrink-0 items-center">
        <button aria-label="Floor list" className="ml-[5px]"><svg width="7" height="4" viewBox="0 0 7 4" aria-hidden="true"><path d="M0 4H7L3.5 0Z" /></svg></button>
        <button aria-label="Add floor" className="ml-[7px]"><Svg s={13}><path d="M6.5 0V13M0 6.5H13" stroke={B} strokeWidth="1.4" /></Svg></button>
        <button aria-label="Previous floor" className="ml-[7px]"><svg width="4" height="8" viewBox="0 0 4 8" aria-hidden="true"><path d="M4 0V8L0 4Z" /></svg></button>
        <button className="ml-[11px] h-[17px] border-r border-[#aaa] px-[2px] pr-2 text-[12px] leading-[21px] font-bold text-[#00008b]">Main Floor</button>
        <button aria-label="Next floor" className="ml-auto"><svg width="4" height="8" viewBox="0 0 4 8" aria-hidden="true"><path d="M0 0V8L4 4Z" /></svg></button>
        <div className="ml-[3px] flex h-[17px] w-[153px] items-center border-r-[3px] border-l-[3px] border-[#d3d3d3]">
          <div className="flex h-[17px] w-[17px] items-center justify-center bg-[#f0f0f0]"><HArrow left /></div>
          <div className="ml-[53px] h-[17px] w-2 bg-[#cdcdcd]" />
          <div className="ml-auto flex h-[17px] w-[14px] items-center justify-center bg-[#f0f0f0]"><HArrow /></div>
        </div>
        <input
          type="range"
          aria-label="Zoom slider"
          defaultValue="68"
          className="mr-1 ml-[5px] h-[17px] w-[140px] appearance-none bg-transparent [&::-webkit-slider-runnable-track]:h-1 [&::-webkit-slider-runnable-track]:border [&::-webkit-slider-runnable-track]:border-[#d6d6d6] [&::-webkit-slider-runnable-track]:bg-[#e7eaea] [&::-webkit-slider-thumb]:-mt-2 [&::-webkit-slider-thumb]:h-[17px] [&::-webkit-slider-thumb]:w-[11px] [&::-webkit-slider-thumb]:appearance-none [&::-webkit-slider-thumb]:border [&::-webkit-slider-thumb]:border-[#acacac] [&::-webkit-slider-thumb]:bg-[#f0f0f0]"
        />
      </div>
      <footer className="flex h-5 shrink-0 items-center bg-[#f4f4f4] pl-[2px]">
        <span className="pt-[2px]">Ready</span>
        <div className="relative ml-auto h-5 w-[120px]">
          <select aria-label="Room" className="h-5 w-full appearance-none border border-[#abadb3] bg-white pt-px pl-1 text-[11px]">
            <option>Room1</option>
          </select>
          <Chevron className="absolute top-[7px] right-[5px]" />
        </div>
        <span className="ml-1 pt-[2px] whitespace-nowrap">Selected: 1 Area: 144.00 SF Perimeter: 48'0"</span>
        <button aria-label="Expand details" className="ml-[7px]"><Svg s={13}><path d="M1 7L6.5 1L12 7M1 12L6.5 6L12 12" stroke="#222" strokeWidth="1.2" /></Svg></button>
        <button aria-label="Full screen" className="mr-[2px] ml-[3px]"><Svg s={14}><rect x="1" y="1" width="12" height="12" stroke="#111" strokeWidth="1.4" /></Svg></button>
      </footer>
    </main>
  );
}

function RightPanel() {
  const frame = (color, inner) => (
    <Svg s={22}>
      <rect x="1" y="1" width="20" height="20" fill="#fff" stroke={G} strokeWidth="1.2" />
      <path d="M0 2H22" stroke={color} strokeWidth="4" />
      {inner}
    </Svg>
  );
  const cell = "flex h-7 w-full items-center justify-center border-t border-[#c5c9d2]";
  return (
    <aside className="flex w-8 shrink-0 flex-col border-r border-l border-[#c5c9d2] bg-[#f4f4f4] text-[11px] leading-4">
      <div className="flex h-[25px] shrink-0 items-center justify-end border-t border-b border-[#c5c9d2] bg-linear-to-r from-white to-[#f0f0f0] pr-[6px]">
        <button aria-label="Show panel" className="mb-1 text-[15px] text-[#333]">«</button>
      </div>
      <div className="grow" />
      <Dots />
      <button aria-label="Properties" className={`${cell} bg-[#ecfffe]`}>
        {frame("#8a4fa3", <><path d="M2 8H11V17H2Z" fill="#8a4fa3" /><path d="M13 9H20M13 12H20M13 14.5H20M13 17H20" stroke={G} /></>)}
      </button>
      <button aria-label="Estimate view" className={cell}>{frame(T, <path d="M6 7V18L17 12.5Z" stroke={B} strokeWidth="1.4" />)}</button>
      <button aria-label="Layout view" className={cell}>{frame(B, <><path d="M6 7H16V18H6Z" stroke={B} strokeWidth="1.2" /><path d="M8 10H12" stroke="#aaa" strokeWidth="1.6" /></>)}</button>
      <div className="h-[29px] border-t border-b border-[#c5c9d2]" />
    </aside>
  );
}

export default function App() {
  return (
    <div className="flex h-screen overflow-hidden bg-[#1c1c1c] pb-2 font-['Open_Sans',sans-serif] text-black">
      <div className="flex min-w-0 grow flex-col">
        <TitleBar />
        <Tabs />
        <Ribbon />
        <div className="flex min-h-0 grow">
          <LeftPanel />
          <div className="w-[3px] shrink-0 bg-[#d3d3d3]" />
          <Center />
          <div className="w-1 shrink-0 bg-[#d3d3d3]" />
          <RightPanel />
        </div>
      </div>
      <div className="flex w-2 shrink-0 flex-col overflow-hidden bg-[#080808]">
        <div className="mt-[34px] h-[69px] shrink-0 bg-[#363636]" />
        <div className="mt-[168px] h-[63px] w-[3px] shrink-0 bg-[#2f4a5e]" />
        <div className="mt-[606px] pl-[3px] text-[11px] leading-4 text-[#9cc3ea]">R</div>
      </div>
    </div>
  );
}
